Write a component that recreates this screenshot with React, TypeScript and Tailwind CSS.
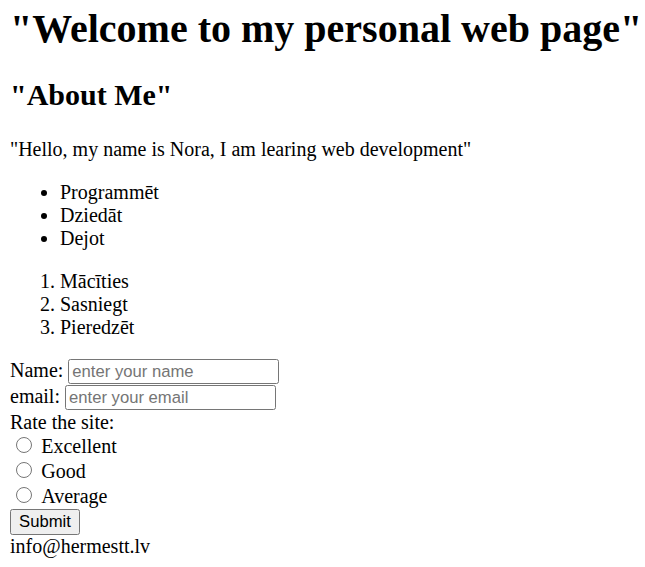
import React from "react";

export default function App() {
  return (
    <div className="bg-white text-black font-['Liberation_Serif',serif] px-[10px] text-[20px] leading-[23px] min-h-[567px]">
      <h1 className="text-[40px] leading-[46px] font-bold pt-[5.5px] mb-[26.8px] whitespace-nowrap">"Welcome to my personal web page"</h1>
      <h2 className="text-[30px] leading-[34.5px] font-bold mb-[24.9px]">"About Me"</h2>
      <p className="mb-[20px]">"Hello, my name is Nora, I am learing web development"</p>
      <ul className="list-disc pl-[50px] mb-[20px]">
        <li>Programmēt</li>
        <li>Dziedāt</li>
        <li>Dejot</li>
      </ul>
      <ol className="list-decimal pl-[50px] mb-[20px]">
        <li>Mācīties</li>
        <li>Sasniegt</li>
        <li>Pieredzēt</li>
      </ol>
      <form onSubmit={(e) => e.preventDefault()}>
        <div className="h-[26px] flex items-baseline">
          <label htmlFor="name">Name:</label>
          <input
            id="name"
            type="text"
            placeholder="enter your name"
            className="ml-[5px] w-[211px] h-[25px] border border-[#767676] rounded-[2.5px] px-[3px] font-['Liberation_Sans',sans-serif] text-[16.67px] leading-[19px] placeholder:text-[#757575] bg-white"
          />
        </div>
        <div className="h-[26px] flex items-baseline">
          <label htmlFor="email">email:</label>
          <input
            id="email"
            type="email"
            placeholder="enter your email"
            className="ml-[5px] w-[211px] h-[25px] border border-[#767676] rounded-[2.5px] px-[3px] font-['Liberation_Sans',sans-serif] text-[16.67px] leading-[19px] placeholder:text-[#757575] bg-white"
          />
        </div>
        <div className="h-[23px]">Rate the site:</div>
        {["Excellent", "Good", "Average"].map((r) => (
          <div key={r} className="h-[25px] flex items-center">
            <input
              type="radio"
              name="rate"
              id={r}
              className="w-[16px] h-[16px] ml-[6.25px] mr-[9px] mt-[-2px]"
            />
            <label htmlFor={r}>{r}</label>
          </div>
        ))}
        <button
          type="submit"
          className="block h-[26px] w-[70px] bg-[#efefef] border border-[#767676] rounded-[2.5px] font-['Liberation_Sans',sans-serif] text-[16.67px] leading-[19px]"
        >
          Submit
        </button>
      </form>
      <div>info@hermestt.lv</div>
    </div>
  );
}
